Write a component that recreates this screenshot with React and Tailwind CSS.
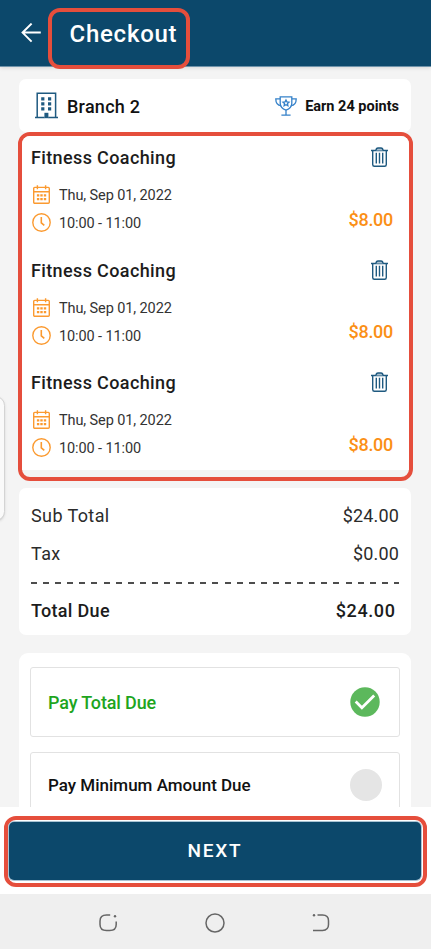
import React, { useState } from "react";

const bookings = [
  { id: 1, title: "Fitness Coaching", date: "Thu, Sep 01, 2022", time: "10:00 - 11:00", price: "$8.00" },
  { id: 2, title: "Fitness Coaching", date: "Thu, Sep 01, 2022", time: "10:00 - 11:00", price: "$8.00" },
  { id: 3, title: "Fitness Coaching", date: "Thu, Sep 01, 2022", time: "10:00 - 11:00", price: "$8.00" },
];

const ArrowIcon = () => (
  <svg width="20" height="20" viewBox="0 0 20 20" fill="none" stroke="#fff" strokeWidth="2">
    <path d="M19.8 9.6H1.8M10.6.6L1.6 9.6l9 9" />
  </svg>
);

const BuildingIcon = () => (
  <svg width="23" height="27" viewBox="0 0 23 27" fill="none" stroke="#1f5a80">
    <path d="M2.2 25.5V1.2h18.4v24.3" strokeWidth="1.5" />
    <path d="M0 25.5h9.6M13.2 25.5H23" strokeWidth="1.5" />
    <path d="M9.4 26.2v-5.4h4v5.4z" fill="#1f5a80" stroke="none" />
    <path
      d="M6.2 5.2h3.2v3.2H6.2zM13 5.2h3.2v3.2H13zM6.2 10.2h3.2v3.2H6.2zM13 10.2h3.2v3.2H13zM6.2 15.2h3.2v3.2H6.2zM13 15.2h3.2v3.2H13z"
      fill="#1f5a80"
      stroke="none"
    />
  </svg>
);

const TrophyIcon = () => (
  <svg width="22" height="20" viewBox="0 0 22 20" fill="none" stroke="#3581c9" strokeWidth="1.3">
    <path d="M5.2.8h11.6v6.4c0 3.4-2.4 5.6-5.8 7-3.4-1.4-5.8-3.6-5.8-7z" />
    <path d="M5.2 2.9H.8c0 4 1.6 6.4 5.4 6.8M16.8 2.9h4.4c0 4-1.6 6.4-5.4 6.8" />
    <path d="M11 14.2v4.9M6.4 19.2h9.2" />
    <path d="M11 4l.9 1.9 2.1.3-1.5 1.4.4 2.1-1.9-1-1.9 1 .4-2.1L8 6.200l2.100-.3z" />
  </svg>
);

const TrashIcon = () => (
  <svg width="17" height="20" viewBox="0 0 17 20" fill="none" stroke="#1f5a80" strokeWidth="1.4">
    <path d="M0 3.5h17" />
    <path d="M5 3.4c.1-1.500.8-2.400 2-2.400h3c1.200 0 1.900.9 2 2.400" fill="#a9c0cf" />
    <path d="M1.700 3.600v13.800c0 1.100.6 1.800 1.700 1.800h10.200c1.100 0 1.700-.7 1.700-1.800V3.600" />
    <path d="M5.300 5.800v10.800M8.500 5.800v10.800M11.700 5.800v10.800" />
  </svg>
);

const CalendarIcon = () => (
  <svg width="17" height="19" viewBox="0 0 17 19" fill="none" stroke="#fb9a30" strokeWidth="1.4">
    <rect x=".7" y="2.4" width="15.6" height="15.9" rx="1" />
    <path d="M.6 6.8h15.8M4.4.2v4M12.6.2v4" />
    <path
      d="M3.9 9.3h2.4v2.2H3.9zM7.3 9.3h2.4v2.2H7.3zM10.8 9.3h2.4v2.2h-2.4zM3.9 13h2.4v2.2H3.9zM7.3 13h2.4v2.2H7.3zM10.8 13h2.4v2.2h-2.4z"
      fill="#fb9a30"
      stroke="none"
    />
  </svg>
);

const ClockIcon = () => (
  <svg width="19" height="19" viewBox="0 0 19 19" fill="none" stroke="#fb9a30" strokeWidth="1.4">
    <circle cx="9.5" cy="9.5" r="8.7" />
    <path d="M9.3 4v5.8l3 2.6" strokeWidth="1.6" />
  </svg>
);

const Booking = ({ item, onRemove }) => (
  <li className="flex h-[112.5px] justify-between pt-[10px]">
    <div>
      <h2 className="text-[18px] leading-6 font-medium tracking-[0.37px] text-[#1c1c1c]">{item.title}</h2>
      <div className="mt-[15px] flex h-[22px] items-start pl-[2px]">
        <CalendarIcon />
        <span className="ml-[9px] text-[14.5px] leading-[22px] tracking-[-0.1px] text-[#333]">{item.date}</span>
      </div>
      <div className="mt-[6px] flex h-[22px] items-start pl-px">
        <ClockIcon />
        <span className="ml-[8px] text-[14.5px] leading-[22px] tracking-[-0.1px] text-[#333]">{item.time}</span>
      </div>
    </div>
    <div className="flex flex-col items-end">
      <button onClick={() => onRemove(item.id)} className="mr-[5.5px] mt-px">
        <TrashIcon />
      </button>
      <span className="mt-[40.5px] text-[18px] leading-6 font-medium tracking-[-0.3px] text-[#fb8f15]">{item.price}</span>
    </div>
  </li>
);

export default function App() {
  const [items, setItems] = useState(bookings);
  const [payment, setPayment] = useState("total");

  const removeItem = (id) => setItems(items.filter((i) => i.id !== id));

  return (
    <div className="relative flex h-[949px] w-[431px] flex-col overflow-hidden bg-[#f4f4f4] font-[Roboto,sans-serif]">
      {/* Header */}
      <header className="flex h-[67px] shrink-0 items-start border-b border-[#6f93aa] bg-[#0c486b] shadow-[0_1px_4px_rgba(0,0,0,0.12)]">
        <button className="mt-[23px] ml-[21px]">
          <ArrowIcon />
        </button>
        <div className="mt-[8px] ml-[7px] h-[61px] w-[142px] shrink-0 rounded-[12px] border-4 border-[#e54e3c] pt-[6px] pl-[17.5px]">
          <h1 className="text-[24px] leading-8 font-medium tracking-[0.75px] text-white">Checkout</h1>
        </div>
      </header>

      {/* Scroll area */}
      <main className="flex min-h-0 flex-1 flex-col overflow-hidden pt-[12px] pr-[20px] pl-[19px]">
        <div className="flex h-[53px] shrink-0 items-center rounded-[7px] bg-white pr-[12px] pl-[16px]">
          <BuildingIcon />
          <span className="ml-[9px] pt-[2px] text-[18px] leading-6 font-medium tracking-[0.25px] text-[#111]">Branch 2</span>
          <div className="ml-auto flex items-center">
            <TrophyIcon />
            <span className="ml-[8px] pt-[2px] text-[14.5px] leading-5 font-bold text-[#111]">Earn 24 points</span>
          </div>
        </div>

        <div className="-mr-[2px] -ml-px h-[349px] shrink-0 overflow-hidden rounded-[12px] border-4 border-[#e54e3c] bg-[#f3f3f3]">
          <ul className="h-[334px] overflow-hidden bg-white pr-[16px] pl-[9px]">
            {items.map((item) => (
              <Booking key={item.id} item={item} onRemove={removeItem} />
            ))}
          </ul>
        </div>

        {/* Totals */}
        <section className="mt-[7px] h-[147px] shrink-0 rounded-[7px] bg-white px-[12px] pt-[16px] text-[18px] leading-6 text-[#2b2b2b]">
          <div className="flex justify-between">
            <span className="tracking-[0.4px]">Sub Total</span>
            <span className="tracking-[0.15px]">$24.00</span>
          </div>
          <div className="mt-[14px] flex justify-between">
            <span className="tracking-[0.4px]">Tax</span>
            <span className="tracking-[0.15px]">$0.00</span>
          </div>
          <div className="mt-[16px] h-[2px] bg-[repeating-linear-gradient(90deg,#4d4d4d_0_6px,transparent_6px_12.1px)]"></div>
          <div className="mt-[15px] flex justify-between pr-[3.5px] font-medium text-[#1c1c1c]">
            <span className="tracking-[0.3px]">Total Due</span>
            <span className="tracking-[0.6px]">$24.00</span>
          </div>
        </section>

        {/* Payment options */}
        <section className="mt-[18px] flex h-[240px] shrink-0 flex-col gap-[15px] rounded-t-[9px] bg-white px-[11px] pt-[14px]">
          <button
            onClick={() => setPayment("total")}
            className="flex h-[70px] w-[370px] shrink-0 items-center justify-between rounded-[3px] border border-[#e2e2e2] pr-[19.5px] pl-[17px]"
          >
            <span className="pt-[2px] text-[18px] leading-6 font-medium tracking-[-0.15px] text-[#1ea51e]">Pay Total Due</span>
            <svg width="30" height="30" viewBox="0 0 30 30" fill="none">
              <circle cx="15" cy="15" r="14.7" fill={payment === "total" ? "#5cb85c" : "#e5e5e5"} />
              {payment === "total" && <path d="M5.7 14.5l6.2 6.2L24.2 8.6" stroke="#fff" strokeWidth="2.8" />}
            </svg>
          </button>
          <button
            onClick={() => setPayment("minimum")}
            className="flex h-[70px] w-[370px] shrink-0 items-center justify-between rounded-[3px] border border-[#e2e2e2] pr-[17px] pb-[4px] pl-[17px]"
          >
            <span className="text-[17px] leading-6 font-medium text-[#111]">Pay Minimum Amount Due</span>
            <span className="h-8 w-8 rounded-full bg-[#e5e5e5]"></span>
          </button>
        </section>
      </main>

      {/* Next */}
      <div className="h-[87px] shrink-0 bg-white px-[4px] pt-[9px]">
        <div className="h-[71px] rounded-[12px] border-4 border-[#e54e3c] pt-[1.5px] pr-[2px] pl-px">
          <button className="h-[58px] w-full rounded-[5px] bg-[#0c486b] pt-[2px] text-[19px] font-medium tracking-[1.8px] text-white shadow-[0_0_0_1px_#a9c3d3]">
            NEXT
          </button>
        </div>
      </div>

      {/* System navigation */}
      <nav className="flex h-[55px] shrink-0 items-center justify-between bg-[#efefef] pt-[3px] pr-[101px] pl-[98px]">
        <svg width="20" height="18" viewBox="0 0 20 18" fill="none" stroke="#666" strokeWidth="1.5">
          <path d="M12.2 1H8.500C4 1 2 3 2 7v3.500c0 4 2 6 6.500 6h3.200c4.500 0 6.500-2 6.500-6V7.500" />
          <circle cx="17" cy="2.3" r="1.2" fill="#666" stroke="none" />
        </svg>
        <svg width="20" height="20" viewBox="0 0 20 20" fill="none" stroke="#666" strokeWidth="1.5">
          <circle cx="10" cy="10" r="9" />
        </svg>
        <svg width="18" height="18" viewBox="0 0 18 18" fill="none" stroke="#666" strokeWidth="1.5">
          <circle cx="2" cy="1.3" r="1.2" fill="#666" stroke="none" />
          <path d="M5.5 1h5c4 0 6 1.800 6 5.800v3.800c0 4-2 5.800-6 5.800H1" />
        </svg>
      </nav>

      {/* Edge panel handle */}
      <div className="absolute top-[396px] -left-[14px] h-[125px] w-[19px] rounded-[12px] border border-[#d4d4d4] bg-[#fafafa] shadow-sm"></div>
    </div>
  );
}
